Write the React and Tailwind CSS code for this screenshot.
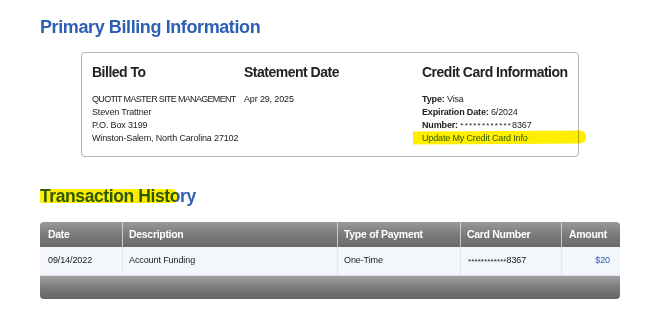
export default function App() {
  const font = { fontFamily: '"Liberation Sans", Arial, sans-serif' };
  return (
    <div className="w-[670px] h-[326px] bg-white relative" style={font}>
      <div className="pl-[40px] pt-[16px]">
        <h1 className="text-[18px] leading-[22px] font-bold tracking-[-0.4px] text-[#2d5fb4]">Primary Billing Information</h1>
      </div>
      <div className="ml-[81px] mt-[14px] w-[498px] h-[105px] border border-[#b4b4b4] rounded-[4px] flex pl-[10px] pt-[10px] text-[#222] whitespace-nowrap">
        <div className="w-[152px]">
          <div className="text-[14px] leading-[18px] font-bold tracking-[-0.5px]">Billed To</div>
          <div className="mt-[12px] text-[9px] leading-[13px] tracking-[-0.15px]">
            <div className="tracking-[-0.68px]">QUOTIT MASTER SITE MANAGEMENT</div>
            <div>Steven Trattner</div>
            <div>P.O. Box 3199</div>
            <div>Winston-Salem, North Carolina 27102</div>
          </div>
        </div>
        <div className="w-[178px]">
          <div className="text-[14px] leading-[18px] font-bold tracking-[-0.5px]">Statement Date</div>
          <div className="mt-[12px] text-[9px] leading-[13px] tracking-[-0.15px]">Apr 29, 2025</div>
        </div>
        <div>
          <div className="text-[14px] leading-[18px] font-bold tracking-[-0.5px]">Credit Card Information</div>
          <div className="mt-[12px] text-[9px] leading-[13px] tracking-[-0.15px]">
            <div><span className="font-bold">Type:</span> Visa</div>
            <div><span className="font-bold">Expiration Date:</span> 6/2024</div>
            <div><span className="font-bold">Number:</span> <span className="text-[8px] tracking-[1.2px] align-top">************</span>8367</div>
            <div className="relative">
              <span className="text-[#2d5fb4]">Update My Credit Card Info</span>
              <span className="absolute left-[-9px] top-[-1px] w-[173px] h-[13px] bg-[#ffee00] mix-blend-multiply rounded-r-[6px] rotate-[-0.4deg]"></span>
            </div>
          </div>
        </div>
      </div>
      <div className="pl-[40px] mt-[28px] relative">
        <h2 className="text-[17.5px] leading-[22px] font-bold tracking-[-0.4px] text-[#2d5fb4] relative inline-block">
          Transaction History
          <span className="absolute left-0 top-[4px] w-[138px] h-[14px] bg-[#ffee00] mix-blend-multiply rounded-r-[10px] rounded-l-[3px]"></span>
        </h2>
      </div>
      <div className="ml-[40px] mt-[13px] w-[580px] rounded-[4px] overflow-hidden text-[9px] tracking-[-0.1px] whitespace-nowrap">
        <div className="flex h-[25px] bg-gradient-to-b from-[#999999] via-[#7b7b7b] to-[#6a6a6a] text-white font-bold text-[10.5px] tracking-[-0.3px] items-center">
          <div className="w-[82px] pl-[8px]">Date</div>
          <div className="w-[215px] h-full flex items-center pl-[6px] border-l border-[#c8c8c8]">Description</div>
          <div className="w-[123px] h-full flex items-center pl-[6px] border-l border-[#c8c8c8]">Type of Payment</div>
          <div className="w-[101px] h-full flex items-center pl-[6px] border-l border-[#c8c8c8]">Card Number</div>
          <div className="flex-1 h-full flex items-center pl-[7px] border-l border-[#c8c8c8]">Amount</div>
        </div>
        <div className="flex h-[29px] bg-[#f3f6fa] text-[#222] items-center border-b border-[#dde2ea]">
          <div className="w-[82px] pl-[8px]">09/14/2022</div>
          <div className="w-[215px] h-full flex items-center pl-[6px] border-l border-[#e2e6ec]">Account Funding</div>
          <div className="w-[123px] h-full flex items-center pl-[6px] border-l border-[#e2e6ec]">One-Time</div>
          <div className="w-[101px] h-full flex items-center pl-[7px] border-l border-[#e2e6ec]"><span className="text-[8px] tracking-[0.1px] self-start mt-[9px]">************</span>8367</div>
          <div className="flex-1 h-full flex items-center justify-end pr-[10px] border-l border-[#e2e6ec] text-[#2d5fb4]">$20</div>
        </div>
        <div className="h-[23px] bg-gradient-to-b from-[#a0a0a0] via-[#7c7c7c] to-[#646464]"></div>
      </div>
    </div>
  );
}
